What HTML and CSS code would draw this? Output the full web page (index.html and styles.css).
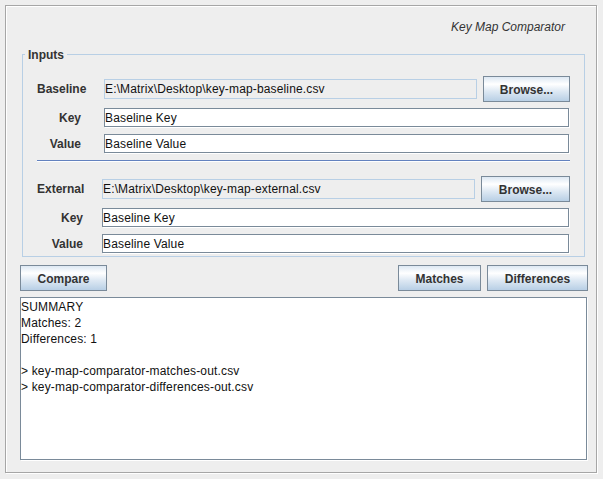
FILE: index.html
```html
<!DOCTYPE html>
<html lang="en">
<head>
<meta charset="utf-8">
<title>Key Map Comparator</title>
<link rel="stylesheet" href="styles.css">
</head>
<body>
<div class="frame">
  <div class="title">Key Map Comparator</div>
  <div class="group">
    <span class="group-title">Inputs</span>
    <div class="section section-baseline">
      <div class="row row-tall">
        <span class="lbl lbl-main">Baseline</span>
        <div class="field field-ro">E:\Matrix\Desktop\key-map-baseline.csv</div>
        <button class="btn btn-browse">Browse...</button>
      </div>
      <div class="row">
        <span class="lbl">Key</span>
        <div class="field">Baseline Key</div>
      </div>
      <div class="row">
        <span class="lbl">Value</span>
        <div class="field">Baseline Value</div>
      </div>
    </div>
    <div class="separator"></div>
    <div class="section section-external">
      <div class="row row-tall">
        <span class="lbl lbl-main">External</span>
        <div class="field field-ro">E:\Matrix\Desktop\key-map-external.csv</div>
        <button class="btn btn-browse btn-browse-wide">Browse...</button>
      </div>
      <div class="row">
        <span class="lbl">Key</span>
        <div class="field">Baseline Key</div>
      </div>
      <div class="row">
        <span class="lbl">Value</span>
        <div class="field">Baseline Value</div>
      </div>
    </div>
  </div>
  <div class="actions">
    <button class="btn btn-compare">Compare</button>
    <div class="actions-right">
      <button class="btn btn-matches">Matches</button>
      <button class="btn btn-diff">Differences</button>
    </div>
  </div>
  <div class="output"><div class="line">SUMMARY</div><div class="line">Matches: 2</div><div class="line">Differences: 1</div><div class="line">&nbsp;</div><div class="line">&gt; key-map-comparator-matches-out.csv</div><div class="line">&gt; key-map-comparator-differences-out.csv</div></div>
</div>
</body>
</html>
```

FILE: styles.css
```css
* { box-sizing: border-box; }

html, body {
  margin: 0;
  padding: 0;
}

body {
  width: 603px;
  height: 479px;
  overflow: hidden;
  background: #eeeeee;
  font-family: "Liberation Sans", Arial, sans-serif;
  font-size: 12px;
  color: #333333;
}

.frame {
  margin: 5px 0 0 5px;
  width: 592px;
  height: 468px;
  border: 1px solid #a6a6a6;
  box-shadow: inset 1px 1px 0 #ffffff, 1px 1px 0 #ffffff;
  padding: 0 8px 12px 14px;
  display: flex;
  flex-direction: column;
}

.title {
  flex: none;
  height: 48px;
  padding: 14px 23px 0 0;
  line-height: 15px;
  text-align: right;
  font-style: italic;
  font-size: 12px;
  color: #333333;
}

.group {
  position: relative;
  flex: none;
  margin: 0 3px 0 2px;
  border: 1px solid #b8cfe5;
  padding: 21px 14px 2px 14px;
}

.group-title {
  position: absolute;
  top: -7px;
  left: 2px;
  padding: 0 3px;
  background: #eeeeee;
  font-weight: bold;
  line-height: 15px;
  color: #333333;
}

.section {
  display: flex;
  flex-direction: column;
  gap: 6px;
}

.row {
  display: flex;
  align-items: flex-start;
  height: 20px;
}

.row-tall {
  height: 26px;
  align-items: center;
}

.lbl {
  flex: none;
  font-weight: bold;
  text-align: right;
  line-height: 21px;
  color: #333333;
}

.row-tall .lbl { line-height: 27px; }

.section-baseline .lbl { width: 67px; padding-right: 23px; }
.section-baseline .lbl-main { padding-right: 18px; }
.section-external .lbl { width: 65px; padding-right: 19px; }

.field {
  flex: 1;
  min-width: 0;
  height: 19px;
  margin-right: 1px;
  border: 1px solid #7a8a99;
  box-shadow: 1px 1px 0 #ffffff;
  background: #ffffff;
  padding: 0;
  line-height: 19px;
  letter-spacing: 0.15px;
  color: #111111;
  white-space: nowrap;
  overflow: hidden;
}

.field-ro {
  height: 20px;
  margin-right: 0;
  border-color: #b8cfe5;
  box-shadow: none;
  background: #eeeeee;
  line-height: 19px;
}

.btn {
  flex: none;
  height: 26px;
  margin: 0;
  padding: 1px 0 0;
  border: 1px solid #7a8a99;
  border-radius: 0;
  background: linear-gradient(to bottom, #dde8f3 0%, #ffffff 30%, #dde8f3 60%, #b8cfe5 100%);
  font-family: "Liberation Sans", Arial, sans-serif;
  font-size: 12px;
  font-weight: bold;
  color: #333333;
  text-align: center;
}

.btn-browse { width: 87px; margin-left: 6px; }
.btn-browse-wide { width: 89px; }

.separator {
  height: 2px;
  margin: 6px 0 14px;
  border-top: 1px solid #6382bf;
  border-bottom: 1px solid #ffffff;
}

.actions {
  flex: none;
  display: flex;
  justify-content: space-between;
  margin-top: 8px;
  height: 26px;
}

.actions-right {
  display: flex;
  gap: 6px;
}

.btn-compare { width: 87px; }
.btn-matches { width: 83px; }
.btn-diff { width: 101px; }

.output {
  flex: 1;
  margin-top: 6px;
  margin-right: 1px;
  border: 1px solid #7a8a99;
  box-shadow: 1px 1px 0 #ffffff;
  background: #ffffff;
  padding: 1px 0 0 0;
  color: #111111;
}

.line {
  line-height: 16px;
  letter-spacing: 0.17px;
  white-space: pre;
}
```
